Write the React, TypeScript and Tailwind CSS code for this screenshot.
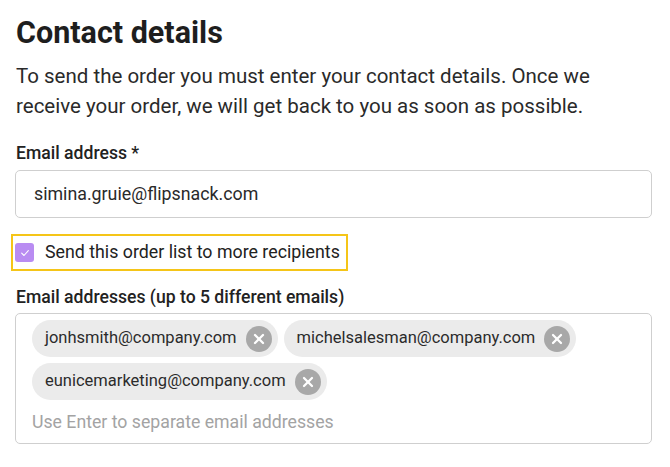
import { X } from "lucide-react";

const recipients = [
  "jonhsmith@company.com",
  "michelsalesman@company.com",
  "eunicemarketing@company.com",
];

const Chip = ({ email }: { email: string }) => (
  <div className="flex items-center h-[37px] rounded-full bg-[#ebebeb] pl-[13px] pr-[6px] gap-[9px]">
    <span className="text-[16.5px] text-[#2b2b2b]">{email}</span>
    <span className="flex items-center justify-center w-[26px] h-[26px] rounded-full bg-[#a8a8a8]">
      <X className="w-[16px] h-[16px] text-white" strokeWidth={3.4} />
    </span>
  </div>
);

export default function App() {
  return (
    <div
      className="w-[670px] h-[467px] bg-white pl-4 pr-[18px] pt-[15px] text-[#222]"
      style={{ fontFamily: "Roboto, 'Liberation Sans', sans-serif" }}
    >
      <h1 className="text-[30.5px] leading-[36px] font-bold text-[#1e1e1e]">Contact details</h1>
      <p className="mt-[10px] text-[20.5px] leading-[30px] text-[#2a2a2a]">
        To send the order you must enter your contact details. Once we receive your order, we
        will get back to you as soon as possible.
      </p>

      <label className="block mt-[20px] text-[17.6px] leading-[24px] font-medium text-[#222]">
        Email address *
      </label>
      <div className="mt-[5px] -ml-px h-[48px] rounded-[5px] border border-[#cfcfcf] flex items-center pl-[18px] text-[17.8px] text-[#2a2a2a]">
        simina.gruie@flipsnack.com
      </div>

      <div className="mt-[16px] -ml-[5px] inline-flex items-center gap-[11px] border-2 border-[#f5c518] pl-[2px] pr-[6px] h-[37px]">
        <span className="flex items-center justify-center w-[19px] h-[19px] rounded-[3px] bg-[#b98cf2]">
          <svg viewBox="0 0 12 12" className="w-[10px] h-[10px]" fill="none">
            <path d="M2 6.2 L4.8 9 L10 3.2" stroke="white" strokeWidth="1.3" strokeLinecap="round" strokeLinejoin="round" />
          </svg>
        </span>
        <span className="text-[17.8px] text-[#222]">Send this order list to more recipients</span>
      </div>

      <label className="block mt-[14px] text-[17.6px] leading-[24px] font-medium text-[#222]">
        Email addresses (up to 5 different emails)
      </label>
      <div className="mt-[4px] -ml-px h-[131px] rounded-[5px] border border-[#cfcfcf] pl-[16px] pr-3 pt-[6px]">
        <div className="flex flex-wrap gap-[6px]">
          {recipients.map((r) => (
            <Chip key={r} email={r} />
          ))}
        </div>
        <div className="mt-[10px] text-[17.7px] leading-[24px] text-[#a3a3a3]">
          Use Enter to separate email addresses
        </div>
      </div>
    </div>
  );
}
